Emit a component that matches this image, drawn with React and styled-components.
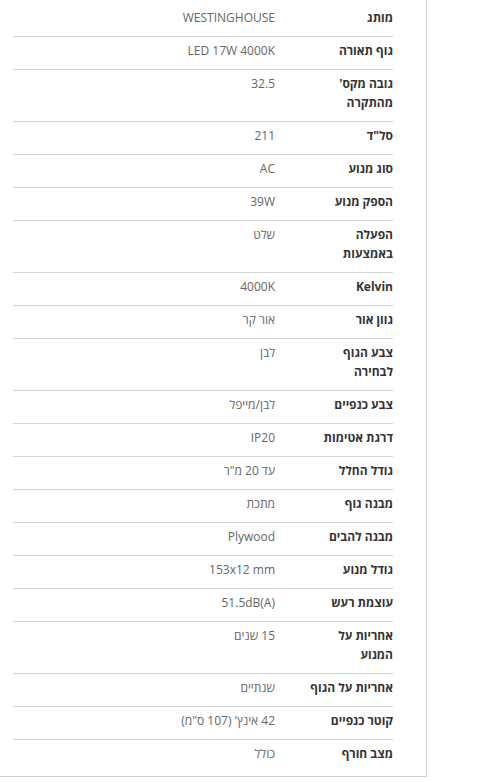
import React from 'react';
import styled, { createGlobalStyle } from 'styled-components';

const specs = [
  { label: 'מותג', value: 'WESTINGHOUSE' },
  { label: 'גוף תאורה', value: 'LED 17W 4000K' },
  { label: "גובה מקס' מהתקרה", value: '32.5' },
  { label: 'סל"ד', value: '211' },
  { label: 'סוג מנוע', value: 'AC' },
  { label: 'הספק מנוע', value: '39W' },
  { label: 'הפעלה באמצעות', value: 'שלט' },
  { label: 'Kelvin', value: '4000K' },
  { label: 'גוון אור', value: 'אור קר' },
  { label: 'צבע הגוף לבחירה', value: 'לבן' },
  { label: 'צבע כנפיים', value: 'לבן/מייפל' },
  { label: 'דרגת אטימות', value: 'IP20' },
  { label: 'גודל החלל', value: 'עד 20 מ"ר' },
  { label: 'מבנה גוף', value: 'מתכת' },
  { label: 'מבנה להבים', value: 'Plywood' },
  { label: 'גודל מנוע', value: '153x12 mm' },
  { label: 'עוצמת רעש', value: '51.5dB(A)' },
  { label: 'אחריות על המנוע', value: '15 שנים' },
  { label: 'אחריות על הגוף', value: 'שנתיים' },
  { label: 'קוטר כנפיים', value: "42 אינץ' (107 ס\"מ)" },
  { label: 'מצב חורף', value: 'כולל' },
];

const GlobalStyle = createGlobalStyle`
  body {
    margin: 0;
    background: #fff;
    font-family: "Open Sans", "DejaVu Sans", sans-serif;
  }
`;

const Panel = styled.div`
  width: 427px;
  box-sizing: border-box;
  border-right: 1px solid #cfcfcf;
  border-bottom: 1px solid #cfcfcf;
  padding: 4px 33px 3px 13px;
`;

const SpecTable = styled.div`
  direction: rtl;
  display: flex;
  flex-direction: column;
`;

const Row = styled.div`
  display: grid;
  grid-template-columns: 84px 1fr;
  column-gap: 34px;
  padding: 4px 0 9px;
  border-bottom: 1px solid ${p => (p.$last ? 'transparent' : '#d4d4d4')};
  font-size: 12px;
  line-height: 19px;
`;

const Label = styled.div`
  font-weight: 700;
  color: #333;
  text-align: right;
`;

const Value = styled.div`
  color: #666;
  text-align: right;
`;

export default function App() {
  return (
    <>
      <GlobalStyle />
      <Panel>
        <SpecTable>
          {specs.map((s, i) => (
            <Row key={s.label} $last={i === specs.length - 1}>
              <Label>{s.label}</Label>
              <Value>{s.value}</Value>
            </Row>
          ))}
        </SpecTable>
      </Panel>
    </>
  );
}
